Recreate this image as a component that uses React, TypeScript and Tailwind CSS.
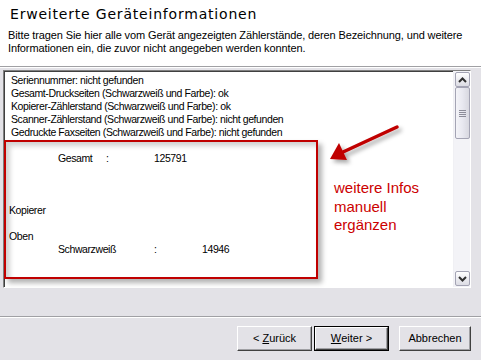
import React from "react";

const sys = "font-['Liberation_Sans',Arial,sans-serif]";

function Button({ children, isDefault, w = "w-[75px]" }: { children: React.ReactNode; isDefault?: boolean; w?: string }) {
  const inner = (
    <div className="w-full h-full flex items-center justify-center bg-[#e3e2e7] border border-t-white border-l-white border-r-[#404040] border-b-[#404040] shadow-[inset_-1px_-1px_0_#a0a0a4] text-[11px] text-black">
      {children}
    </div>
  );
  if (isDefault) {
    return <div className={`${w} h-[25px] border border-black`}>{inner}</div>;
  }
  return <div className={`${w} h-[25px]`}>{inner}</div>;
}

function ArrowBtn({ up }: { up?: boolean }) {
  return (
    <div className="w-[15px] h-[15px] mx-auto rounded-[2px] border border-[#a4a4b4] bg-gradient-to-b from-white to-[#dcdce4] flex items-center justify-center">
      <svg width="9" height="6" viewBox="0 0 9 6">
        <path d={up ? "M1 5 L4.5 1.5 L8 5" : "M1 1 L4.5 4.5 L8 1"} fill="none" stroke="#303030" strokeWidth="2" />
      </svg>
    </div>
  );
}

const lines = [
  "Seriennummer: nicht gefunden",
  "Gesamt-Druckseiten (Schwarzweiß und Farbe): ok",
  "Kopierer-Zählerstand (Schwarzweiß und Farbe): ok",
  "Scanner-Zählerstand (Schwarzweiß und Farbe): nicht gefunden",
  "Gedruckte Faxseiten (Schwarzweiß und Farbe): nicht gefunden",
];

export default function App() {
  return (
    <div className={`${sys} relative w-[481px] h-[360px] overflow-hidden bg-[#e3e2e7] flex flex-col`}>
      {/* header */}
      <div className="h-[67px] bg-white border-b border-[#a0a0a4] shrink-0 pl-[10px] pt-[5px]">
        <div className="font-['DejaVu_Sans',Verdana,sans-serif] text-[14px] leading-[18px] tracking-[0.8px] text-black">
          Erweiterte Geräteinformationen
        </div>
        <div className="mt-[6px] -ml-[2px] text-[11px] leading-[13px] text-black tracking-[-0.12px]">
          Bitte tragen Sie hier alle vom Gerät angezeigten Zählerstände, deren Bezeichnung, und weitere
          <br />
          Informationen ein, die zuvor nicht angegeben werden konnten.
        </div>
      </div>
      <div className="h-px bg-white shrink-0" />

      {/* text box */}
      <div className="mt-[2px] mx-[3px] w-[468px] h-[218px] shrink-0 flex bg-white border border-t-[#808080] border-l-[#808080] border-r-white border-b-white shadow-[inset_1px_1px_0_#404040]">
        <div className="flex-1 pl-[7px] pt-[3px] text-[10.5px] leading-[13px] tracking-[-0.4px] text-black">
          {lines.map((l) => (
            <div key={l}>{l}</div>
          ))}
          <div className="h-[13px]" />
          <div className="flex">
            <span className="w-[47px]" />
            <span className="w-[48px]">Gesamt</span>
            <span className="w-[48px]">:</span>
            <span>125791</span>
          </div>
          <div className="h-[39px]" />
          <div className="-ml-[2px]">Kopierer</div>
          <div className="h-[13px]" />
          <div className="-ml-[2px]">Oben</div>
          <div className="flex">
            <span className="w-[47px]" />
            <span className="w-[96px]">Schwarzweiß</span>
            <span className="w-[48px]">:</span>
            <span>14946</span>
          </div>
        </div>
        {/* scrollbar */}
        <div className="w-[17px] h-full bg-[#f3f3f7] border-l border-[#f0f0f4] flex flex-col pt-[1px] pb-[1px]">
          <ArrowBtn up />
          <div className="w-[15px] h-[52px] mx-auto rounded-[2px] border border-[#a4a4b4] bg-gradient-to-r from-[#f4f4f8] via-[#e8e8f0] to-[#d8d8e0] flex items-center justify-center">
            <div className="flex flex-col gap-[1px]">
              <div className="w-[7px] h-px bg-[#8c8c98]" />
              <div className="w-[7px] h-px bg-[#8c8c98]" />
              <div className="w-[7px] h-px bg-[#8c8c98]" />
              <div className="w-[7px] h-px bg-[#8c8c98]" />
            </div>
          </div>
          <div className="flex-1" />
          <ArrowBtn />
        </div>
      </div>

      {/* separator */}
      <div className="mt-[28px] h-px bg-[#a0a0a4] shrink-0" />
      <div className="h-px bg-white shrink-0" />

      {/* buttons */}
      <div className="mt-[8px] flex justify-end pr-[10px]">
        <Button>
          &lt; <span className="underline ml-[3px]">Z</span>urück
        </Button>
        <div className="w-[2px]" />
        <Button isDefault>
          <span className="underline">W</span>eiter &gt;
        </Button>
        <div className="w-[10px]" />
        <Button w="w-[72px]">Abbrechen</Button>
      </div>

      {/* annotation overlay */}
      <div className="absolute left-[4px] top-[140px] w-[314px] h-[139px] border-2 border-[#c00000] shadow-[4px_4px_5px_rgba(0,0,0,0.3),inset_4px_4px_5px_rgba(0,0,0,0.18)]" />
      <svg className="absolute left-0 top-0" width="481" height="360" viewBox="0 0 481 360">
        <defs>
          <filter id="sh" x="-20%" y="-20%" width="140%" height="140%">
            <feDropShadow dx="3" dy="3" stdDeviation="2" floodColor="#000" floodOpacity="0.35" />
          </filter>
        </defs>
        <g filter="url(#sh)">
          <line x1="397" y1="127" x2="343" y2="152" stroke="#c00000" strokeWidth="3.5" strokeLinecap="round" />
          <path d="M330 159 L339 143 L347 160 Z" fill="#c00000" />
        </g>
      </svg>
      <div className="absolute left-[334px] top-[179px] text-[15px] leading-[18.5px] text-[#cc0000]">
        weitere Infos
        <br />
        manuell
        <br />
        ergänzen
      </div>
    </div>
  );
}
